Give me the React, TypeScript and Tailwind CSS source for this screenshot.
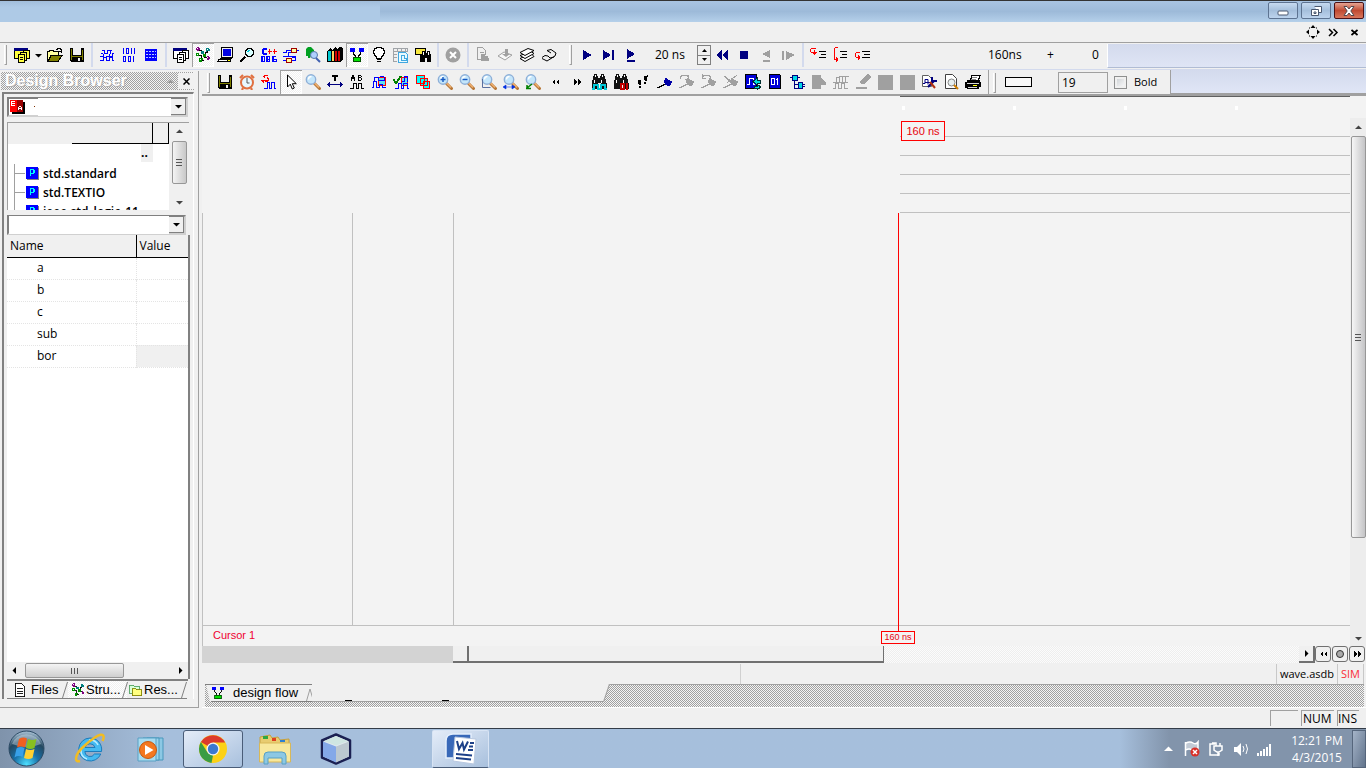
import React from "react";

type ShapeProps = { d: string; s?: string; f?: string; w?: number };
const P = ({ d, s = "none", f = "none", w = 1 }: ShapeProps) => <path d={d} stroke={s} fill={f} strokeWidth={w} />;

const Svg = ({ children, size = 16, smooth = false }: { children: React.ReactNode; size?: number; smooth?: boolean }) => (
  <svg width={size} height={size} viewBox="0 0 16 16" shapeRendering={smooth ? "auto" : "crispEdges"} className="shrink-0" aria-hidden="true">
    {children}
  </svg>
);

const Lens = ({ extra, children }: { extra?: string; children?: React.ReactNode }) => (
  <Svg smooth>
    <path d="M9.5 9.5l5 5" stroke="#b87838" strokeWidth="3" strokeLinecap="round" />
    <path d="M9.5 9l4.5 4.5" stroke="#f0b070" strokeWidth="1.4" />
    <circle cx="6" cy="5.5" r="4.7" fill="#c4e6fb" stroke="#8fb0d8" strokeWidth="1.4" />
    <path d="M3.5 5.5a3 3 0 0 1 3-3" stroke="#fff" fill="none" strokeWidth="1.4" />
    {extra && <path d={extra} stroke="#1459c4" strokeWidth="1.4" fill="none" />}
    {children}
  </Svg>
);

const Binoc = ({ children }: { children?: React.ReactNode }) => (
  <Svg>
    <P f="#111" d="M3 0h3v2h1v2h2V2h1V0h3v2h1v3h1v4h1v6h-6V9H7v6H1V9h0V6h1V2h1z" />
    <P s="#fff" d="M4.500 1v2M11.500 1v2M3.500 6v3M10.500 6v3" />
    {children}
  </Svg>
);

const Pages = ({ fill }: { fill: string }) => (
  <Svg>
    <P d="M.5 1.500h13v10h-13z" s="#000" f={fill} />
    <P d="M0 1h14v3H0z" f="#000080" />
    <P d="M9.500 3.500h6v8h-6z" s="#000" f={fill} />
    <P d="M6.500 5.500h6v8h-6z" s="#000" f={fill} />
    <P d="M4.500 7.500h6v8h-6z" s="#000" f={fill} />
    <P d="M6 10.500h3M6 12.500h3" s="#000" />
  </Svg>
);

const Floppy = () => (
  <Svg>
    <P d="M1 1h14v14H2l-1-1z" f="#000" />
    <P d="M4 1h8v7H4z" f="#f0f0f0" />
    <P d="M2 2h1v11H2zM13 3h1v10h-1z" f="#808000" />
    <P d="M3 9h10v1H3z" f="#808000" />
    <P d="M9 11h2v3H9z" f="#f0f0f0" />
  </Svg>
);

const Tree = ({ size = 16 }: { size?: number }) => (
  <Svg size={size}>
    <P s="#000" d="M3 3.500h3v3h3M12.500 3v2h-2v3M3 8.500h3M6.500 8v3M9.500 8v2h3M6 13.500h3" />
    <P f="#800080" d="M2 0h2v1h1v2H4v1H2V3H1V1h1zM12 9h2v1h1v2h-1v1h-2z" />
    <P f="#008080" d="M11 1h3v1h1v2h-3v1h-1zM6 4h3v3H6z" />
    <P f="#009000" d="M1 6h3v3H1zM4 11h4v2H7v2H4zM8 7h3v3H8z" />
    <P f="#fff" d="M2 1h1v1H2zM12 2h1v1h-1zM2 7h1v1H2zM5 12h1v1H5zM12 10h1v1h-1z" />
  </Svg>
);

const Design = ({ size = 16 }: { size?: number }) => (
  <Svg size={size}>
    <P s="#000" d="M4.500 5v2h1v1h1v2M11.500 5v2h-1v1h-1v2" />
    <P f="#0000ff" d="M1 1h5v4H1zM10 1h5v4h-5z" />
    <P s="#005000" f="#00e000" d="M4.500 10.500h7v4h-7z" />
  </Svg>
);

const Flag = ({ c, mark }: { c: string; mark?: string }) => (
  <Svg>
    <P s={c === "#0000a8" ? "#000" : c} d="M0 13.500h2v-1h2v-1h2v-1h2v-2h2" />
    <P f={c} d="M8 4h2v1h1v1h2v1h2v2h-1v2h-1v1h-3v-1H8V9H7V6h1z" />
    {mark && <P s={c} d={mark} />}
  </Svg>
);

const G = "#a0a0a0";
const Icons: Record<string, React.ReactNode> = {
  windows: <Pages fill="#ffff40" />,
  docs: <Pages fill="#ffffff" />,
  open: (
    <Svg>
      <P d="M.5 14.500v-10h2v-1h4v1h5v3" s="#000" f="#ffffa0" />
      <P d="M1 14.500l3-6h11l-4 6z" s="#000" f="#808000" />
      <P d="M9 2.500h1v-1h3v1h1v3M12 4.500h3" s="#000" />
    </Svg>
  ),
  save: <Floppy />,
  wavew: (
    <Svg>
      <P s="#0000ff" d="M3 3.500h2v3h3v-3h3v3M11 3.500h2M2 6.500h2M1 9.500h3v-3M7 9.500h3v-3M10 9.500h3v-3h2M1 13.500h3v-3h3v3h3v-3h3v3h2" />
    </Svg>
  ),
  bits: (
    <Svg>
      <P s="#0000ff" d="M2.500 1v6M5.500 1.500h2v5h-2zM10.500 1v6M13.500 1v6M2.500 9.500h2v5h-2zM7.500 9.500h2v5h-2zM12.500 9v6" />
    </Svg>
  ),
  grid: (
    <Svg>
      <P f="#0000ff" d="M2 2h12v12H2z" />
      <P s="#b8c8ff" d="M3 4.500h10M3 7.500h10M3 10.500h10" />
      <P s="#0000ff" d="M5.500 2v12M8.500 2v12M11.500 2v12" />
    </Svg>
  ),
  tree: <Tree />,
  pc: (
    <Svg>
      <P s="#000" f="#f0f0f0" d="M4.500 .5h11v10h-11z" />
      <P f="#0000e0" d="M6 2h8v7H6z" />
      <P f="#000" d="M3 11h12v1H3zM1 12h13v3H0v-1h1z" />
      <P s="#fff" d="M2 13.500h8" />
      <P s="#ffff00" d="M11 13.500h2" />
    </Svg>
  ),
  lens: (
    <Svg>
      <P s="#000" w={2} d="M1 15l5-5" />
      <P s="#000" f="#d8ffff" d="M8 1.500h4.500v1h1v1h1v4h-1v1h-1v1H8v-1H7v-1H6v-4h1v-1h1z" />
      <P s="#00c8d8" d="M8 4.500h1v-1h2" />
    </Svg>
  ),
  cpp: (
    <Svg>
      <P f="#0000ff" d="M2 1h4v2H3v3h3v2H2V7H1V2h1z" />
      <P s="#ff0000" d="M7 4.500h4M8.500 2v5M12 4.500h4M13.500 2v5" />
      <P s="#0000ff" d="M1.500 9v6M.5 9.500h3v5h-3zM6.500 9.500h2v5h-2zM6 12.500h3M5.500 9v6M15 9.500h-3v5h3v-2h-2M11.500 9v6" />
    </Svg>
  ),
  blocks: (
    <Svg>
      <P s="#0000ff" d="M0 9.500h5M0 5.500h3v-2h5M13 3.500h3M3 13.500h-3M8 13.500h4v-4H5v-4h4M9 10.500h3" />
      <P s="#a00000" f="#ffffa0" d="M8.500 1.500h5v4h-5zM3.500 11.500h5v4h-5z" />
    </Svg>
  ),
  find: (
    <Svg smooth>
      <P f="#00a020" d="M1 2l2-2h3l3 3v6H6l-1 2H3V9H1z" />
      <circle cx="9" cy="8" r="3.500" fill="#b0d0ff" stroke="#5878a8" />
      <P s="#4060b0" w={2} d="M11 11l4 4" />
    </Svg>
  ),
  books: (
    <Svg>
      <P f="#000" d="M0 4l3-3 2 2 3-3 2 2 3-3 3 2v11l-2 3H0z" />
      <P f="#00c8d0" d="M1 4h3v10H1z" />
      <P f="#ffd060" d="M5 4h2v10H5z" />
      <P f="#d00000" d="M8 4h2v10H8zM11 4h2v10h-2z" />
    </Svg>
  ),
  design: <Design />,
  bulb: (
    <Svg>
      <P s="#000" f="#fff" d="M5.500 .5h5v1h2v2h1v3h-1v2h-1v1h-1v2h-5v-2h-1v-1h-1v-2h-1v-3h1v-2h2z" />
      <P s="#000" d="M6 12.500h4M6 14.500h4" />
    </Svg>
  ),
  sheet: (
    <Svg>
      <P s="#a0a4a8" d="M.5 1.500h14v3h-14zM.5 4v10h3M1 7.500h3M1 10.500h3M4.500 1v3M8.500 1v3M12.500 1v3" />
      <P s="#40a8e0" f="#e8faff" d="M5.500 5.500h7l2 2v8h-9zM8 8.500h3v3h2v2h-5z" />
    </Svg>
  ),
  finder: (
    <Svg>
      <P s="#000" f="#f8e840" d="M.5 1.500h10v6h-10z" />
      <P f="#000" d="M7 4h3v2h2V4h3v3h1v8h-4v-4h-2v4H5V8h2z" />
      <P s="#fff" d="M8.500 5v3M13.500 5v3" />
    </Svg>
  ),
  stopx: (
    <Svg smooth>
      <circle cx="8" cy="8" r="7.500" fill={G} />
      <path d="M5 5l6 6M11 5l-6 6" stroke="#fff" strokeWidth="2" />
    </Svg>
  ),
  gdoc: (
    <Svg>
      <P s={G} d="M2.500 12.500v-12h5l3 3v4M5 5.500h4M3 12.500h3" />
      <P f={G} d="M6 7h4v2h3v2h1v3H6z" />
    </Svg>
  ),
  gin: (
    <Svg smooth>
      <P s={G} f="#f8f8f8" d="M1 9l6-4 8 3-7 5z" />
      <P f={G} d="M8 2h3v5h2l-4 3-4-3h3z" />
    </Svg>
  ),
  stack: (
    <Svg smooth>
      <P s="#000" f="#fff" d="M1 11.500l5 3 9-5-3-3z" />
      <P s="#000" f="#fff" d="M1 8.500l5 3 9-5-3-2z" />
      <P s="#000" f="#fff" d="M1 5.500l5 3 9-5-6-2z" />
    </Svg>
  ),
  page: (
    <Svg smooth>
      <P s="#000" d="M1 11.500l5 2.500 8-5 1-3-5-3.500-4 1 4 2.500M1 10.500l3-2 3 .5 2 2 4-1" />
    </Svg>
  ),
  play: <Svg><P f="#000080" d="M4 3l9 5-9 5z" /></Svg>,
  playto: <Svg><P f="#000080" d="M2 3l8 5-8 5zM11 3h2v10h-2z" /></Svg>,
  playu: <Svg><P f="#000080" d="M4 2l8 5-8 5zM4 13h8v2H4z" /></Svg>,
  rew: <Svg><P f="#000080" d="M8 3v10L2 8zM14 3v10L8 8z" /></Svg>,
  stop: <Svg><P f="#000080" d="M4 4h8v8H4z" /></Svg>,
  grew: <Svg><P f={G} d="M12 3v8L4 7zM5 13h7v2H5z" /></Svg>,
  gfwd: <Svg><P f={G} d="M2 4h2v9H2zM6 4l9 4-9 5z" /></Svg>,
  step1: (
    <Svg>
      <P s="#000" d="M9 4.500h7M11 7.500h5M9 10.500h7" />
      <P s="#ff0000" d="M6 1.500H1M.5 2v3M1 5.500h6M4.500 3v5M3.500 5v2M5.500 5v2" />
    </Svg>
  ),
  step2: (
    <Svg>
      <P s="#000" d="M8 4.500h7M10 7.500h5M8 10.500h7" />
      <P s="#ff0000" d="M6 .5H3M2.500 1v11M2 12.500h4M4.500 10v5M5.500 11v3" />
    </Svg>
  ),
  step3: (
    <Svg>
      <P s="#000" d="M8 4.500h8M10 7.500h6M8 10.500h8" />
      <P s="#ff0000" d="M6 5.500H2M1.500 6v4M2 10.500h4M4.500 8v5M5.500 9v3" />
    </Svg>
  ),
  clock: (
    <Svg smooth>
      <circle cx="8" cy="8.500" r="6" fill="#e8f8ff" stroke="#e07040" strokeWidth="2" />
      <path d="M1 4l3-3M15 4l-3-3M4 14l-1 2M12 14l1 2" stroke="#e07040" strokeWidth="2.200" />
      <path d="M8 4v5h2.500" stroke="#555" fill="none" />
    </Svg>
  ),
  rwave: (
    <Svg>
      <P s="#0000ff" d="M3 14.500h3v-6h2v6h2v-6h3v6h2" />
      <P f="#ff0000" d="M4 0v1h3v1H4v2H3V3H2V2h1V1h1zM6 3h1v1h1v3H7v1H4V7H3V6h4zM0 6h3v3H2V8H1V7H0z" />
    </Svg>
  ),
  arrow: <Svg smooth><P s="#000" f="#fff" d="M4.500 1v12l2.800-2.800 2 4.800 2-1-2-4.300h4z" /></Svg>,
  zoom: <Lens />,
  measure: (
    <Svg>
      <P f="#000" d="M5 1h6v2H9v4H7V3H5z" />
      <P s="#000080" d="M1 10.500h14" />
      <P f="#000080" d="M3 8v5L0 10.500zM13 8v5l3-2.500z" />
    </Svg>
  ),
  ab: (
    <Svg>
      <P s="#000" d="M2.500 7V3h1V1h1v2h1v4M2 4.500h4M9.500 1v6M9 1.500h3M12.500 2v1M9 3.500h3M12.500 4v2M9 6.500h3M1 14.500h3v-5h3v5h2v-5h3v5h3" />
    </Svg>
  ),
  wsel: (
    <Svg>
      <P s="#ff0000" f="#60e0f0" d="M7.500 3.500h7v8h-7z" />
      <P s="#0000ff" d="M1 13.500h1v-6h3v6h3v-3h3v3h4M3 7v-3.500h4V7M8 6.500h5v-4M9 2.500h4" />
    </Svg>
  ),
  wcheck: (
    <Svg>
      <P s="#ff0000" f="#60e0f0" d="M8.500 3.500h6v8h-6z" />
      <P s="#0000ff" d="M2 14.500h3v-5h3v5h2v-5h4v5h2M9 7.500h2v-5h3v5" />
      <P s="#008000" w={2} d="M0 5l3 4 5-7" />
    </Svg>
  ),
  layers: (
    <Svg>
      <P s="#ff0000" f="#00ffff" d="M1.500 1.500h8v8h-8zM5.500 4.500h7v7h-7zM8.500 7.500h6v7h-6z" />
    </Svg>
  ),
  zin: <Lens extra="M3.500 5.500h5M6 3v5" />,
  zout: <Lens extra="M3.500 5.500h5" />,
  zarea: <Lens><path d="M1.500 5v8.500h8" fill="none" stroke="#5a70a0" /></Lens>,
  zfit: <Lens><path d="M1 13h10M0 13l3-2v4zM12 13l-3-2v4z" stroke="#0030e0" fill="#0030e0" strokeWidth=".6" /></Lens>,
  zback: <Lens><path d="M2 15v-4M1 14.500h5M2 14l5-4" stroke="#008000" fill="none" strokeWidth="1.500" /></Lens>,
  prev: <Svg><P f="#000" d="M8 5v6L5 8zM12 5v6L9 8z" /></Svg>,
  next: <Svg><P f="#000" d="M5 5v6l3-3zM9 5v6l3-3z" /></Svg>,
  bwave: <Binoc><P s="#00c8d8" w={2} d="M1 15h2v-4h4v4h3v-4h4v4h2" /></Binoc>,
  bbits: <Binoc><P s="#c00000" w={2} d="M8 10h3v5H8zM14 9v7" /></Binoc>,
  feet: <Svg><P f="#000" d="M3 6h3v5H4v-1H3zM4 12h2v2H4zM9 2h3v5h-2V6H9zM9 8h2v2H9zM12 1h1v2h-1z" /></Svg>,
  flag: <Flag c="#0000a8" />,
  gf1: <Flag c={G} mark="M1.500 5V3l2-2h4l2 2v2M6 5.500h4M9.500 1v4" />,
  gf2: <Flag c={G} mark="M9.500 4V3l-2-2h-4l-2 2M1.500 0v5M1 4.500h4" />,
  gf3: <Flag c={G} mark="M1 2l11 10M14 1L4 9M2 2l11 10" />,
  wexp: (
    <Svg>
      <P s="#000" f="#0000d8" d="M.5 .5h11v14H.5z" />
      <P s="#fff" d="M2 10.500h2v-6h4v6h2" />
      <P s="#003030" f="#00e0e0" d="M12 4v2h3v3h-3v2L8 7.500zM12 10v2h-3v2h3v2l4-3z" />
    </Svg>
  ),
  bexp: (
    <Svg>
      <P s="#000" f="#0000d8" d="M2.500 .5h10l1 1v13h-11z" />
      <P s="#fff" d="M4.500 4.500h3v6h-3zM10.500 4v7M9 5.500h1" />
    </Svg>
  ),
  hier: (
    <Svg>
      <P s="#000080" f="#00d8e8" d="M3.500 1.500h5v5h-5z" />
      <P s="#000080" d="M1 3.500h2M9 3.500h2M5.500 7v7h5M6 10.500h10" />
      <P s="#000080" f="#00d8e8" d="M9.500 8.500h4v6h-4z" />
      <P s="#000080" d="M14 12.500h2" />
    </Svg>
  ),
  gshape: <Svg><P f={G} d="M1 1h9v3l5 5v2h-5v4H1z" /></Svg>,
  gwaves: (
    <Svg><P s={G} d="M3 9V3.500h3V9M6 9V2.500h3V9M9 9V2.500h3V9M12 2.500h4M0 8.500h15M0 14.500h2v-5h3v5h3v-5h3v5h4" /></Svg>
  ),
  gpen: <Svg><P f={G} d="M12 0h2l2 3-6 7H6L4 8zM1 13h11v2H1z" /></Svg>,
  gbox: <Svg><P f={G} d="M1 1h15v15H1z" /></Svg>,
  tools: (
    <Svg smooth>
      <P s="#606060" f="#fff" d="M1.500 1.500h6l3 3v8h-9z" />
      <P s="#000080" d="M2 9.500h2v-4h3v5M4 8.500h5" />
      <P s="#000080" w={2} d="M7 13l6-6M11 3v4h5" />
      <P s="#b03010" w={2} d="M9 8l5 6" />
    </Svg>
  ),
  preview: (
    <Svg smooth>
      <P s="#404040" f="#fff" d="M2.500 .5h7l4 4v10h-11z" />
      <circle cx="8.500" cy="8.500" r="3.500" fill="#e8f0f0" stroke="#888" />
      <P s="#d08000" w={2} d="M11 11l4 4" />
    </Svg>
  ),
  print: (
    <Svg>
      <P s="#000" f="#fff" d="M5 7.500l2-6h8l-2 6z" />
      <P f="#000" d="M2 6h13v2h1v5h-2v2H2v-1H0V8h2z" />
      <P s="#d8d8d8" d="M2 9.500h12M3 13.500h9" />
      <P s="#ffff00" d="M8 11.500h4" />
      <P s="#888" d="M7 3.500h5M6 5.500h5" />
    </Svg>
  ),
};

const Tool = ({ n, on = false }: { n: string; on?: boolean }) => (
  <button
    type="button"
    aria-label={n}
    className={`flex h-6 w-[22px] shrink-0 items-center justify-center ${on ? "bg-[repeating-conic-gradient(#f0f0f0_0_25%,#ffffff_0_50%)] bg-[length:2px_2px] shadow-[inset_1px_1px_0_#a0a0a0,inset_-1px_-1px_0_#ffffff]" : ""}`}
  >
    {Icons[n]}
  </button>
);
const Tools = ({ list, on = [] }: { list: string; on?: string[] }) => (
  <>
    {list.split(" ").map((n, i) => (
      <Tool key={i} n={n} on={on.includes(n)} />
    ))}
  </>
);
const Sep = () => <div className="mx-[3px] h-6 w-0.5 shrink-0 bg-[#d3daed]" />;
const Grip = () => <div className="mx-1 mt-0.5 h-5 w-[3px] shrink-0 border-r border-b border-l border-[#a0a0a0] border-l-white" />;

const Chevron = ({ dir = "down", c = "#000" }: { dir?: "down" | "up" | "left" | "right"; c?: string }) => (
  <svg width="7" height="7" viewBox="0 0 7 7" aria-hidden="true" className="shrink-0">
    <path fill={c} d={{ down: "M0 2h7L3.500 5.500z", up: "M0 5h7L3.500 1.500z", left: "M5 0v7L1.500 3.500z", right: "M2 0v7l3.500-3.500z" }[dir]} />
  </svg>
);

const dither = "bg-[repeating-conic-gradient(#a0a0a0_0_25%,#f4f4f4_0_50%)] bg-[length:2px_2px]";

const Combo = ({ label, icon }: { label: string; icon?: React.ReactNode }) => (
  <div className="flex h-5 items-center border-2 border-[#808080] border-r-[#d0d0d0] border-b-[#d0d0d0] bg-white">
    {icon}
    <select aria-label={label} className="min-w-0 flex-1 appearance-none bg-white outline-none">
      <option></option>
    </select>
    <span className="flex h-full w-[15px] items-center justify-center border-r border-b border-[#808080] bg-[#f0f0f0]">
      <Chevron />
    </span>
  </div>
);

const PIcon = () => (
  <svg width="13" height="13" viewBox="0 0 13 13" className="shrink-0" shapeRendering="crispEdges" aria-hidden="true">
    <path d="M1 1h12v12H1z" fill="#808080" />
    <path d="M0 0h12v12H0z" fill="#0000ff" />
    <path d="M4 2h4v1h1v3H8v1H5v2H4zM5 3v3h2V3z" fill="#00ffff" fillRule="evenodd" />
  </svg>
);

const TitleBar = () => (
  <header className="flex h-[22px] items-start justify-end border-t border-[#333] bg-linear-to-b from-[#a9c4e2] via-[#9dbad9] to-[#b5d0ea] pr-[2px]">
    <div className="mr-auto h-full w-[380px] bg-linear-to-b from-[#a2bedb] to-[#aecae6] to-30%" />
    <div className="flex gap-[3px] pt-px">
      {["Minimize", "Restore", "Close"].map((n) => (
        <button
          key={n}
          type="button"
          aria-label={n}
          className={`flex h-[17px] w-[30px] items-center justify-center rounded-[2px] border ${n === "Close" ? "border-[#4c1217] bg-linear-to-b from-[#e5a493] via-[#c04a32] to-[#d8765c]" : "border-[#5d7391] bg-linear-to-b from-[#c6daf0] via-[#a5bfdc] to-[#bcd3ed]"}`}
        >
          <svg width="14" height="12" viewBox="0 0 14 12" aria-hidden="true">
            {n === "Minimize" && <rect x="2" y="6" width="10" height="4" rx="1" fill="#fff" stroke="#4a5870" />}
            {n === "Restore" && <path d="M5.500 1.500h7v6h-3M2.500 4.500h7v6h-7zM5 7h2v1.500H5z" fill="#fff" stroke="#4a5870" />}
            {n === "Close" && <path d="M2 1.500h3l2 2.500 2-2.500h3L8.800 6l3.200 4.500H9L7 8l-2 2.500H2L5.200 6z" fill="#fff" stroke="#53484e" />}
          </svg>
        </button>
      ))}
    </div>
  </header>
);

const DesignBrowser = () => (
  <aside className="mt-px flex w-[199px] shrink-0 flex-col border-r border-b border-[#a0a0a0] pb-2 pl-px">
    <div className={`mt-px mr-1 flex h-[18px] items-center ${dither}`}>
      <h1 className="flex-1 pl-1 font-['Liberation_Sans'] text-[16px] leading-4 font-bold text-white [text-shadow:1px_1px_0_#b0b0b0]">Design Browser</h1>
      <span className="mr-1"><Chevron dir="up" c="#989898" /></span>
      <button type="button" aria-label="Close panel" className="flex h-4 w-4 items-center justify-center bg-[#f0f0f0]">
        <svg width="7" height="7" viewBox="0 0 7 7"><path d="M.5.5l6 6M6.500.5l-6 6" stroke="#000" strokeWidth="1.500" /></svg>
      </button>
    </div>
    <div className="mt-[2px] mr-[4px] ml-px flex flex-1 flex-col border-t-2 border-r border-l-2 border-t-[#808080] border-r-white border-l-[#808080] pt-[3px] pl-[3px]">
      <div className="mr-[5px]">
        <Combo
          label="Design root"
          icon={
            <svg width="28" height="16" viewBox="0 0 28 16" shapeRendering="crispEdges" className="ml-px" aria-hidden="true">
              <path d="M2 3h13v12H2z" fill="#000" />
              <path d="M0 1h7v12H0z" fill="#f00" />
              <path d="M7 1h6v12H7z" fill="#900" />
              <path d="M5 2.500H2M1.500 2v5M2 4.500h3M2 6.500h3M8.500 11V8M9 7.500h2M11.500 8v3M9 9.500h2" fill="none" stroke="#fff" />
              <path d="M24 7h1v1h-1z" fill="#803000" />
            </svg>
          }
        />
      </div>
      <div className="mt-[5px] mr-1 flex h-[88px] border-t border-l border-[#a0a0a0] bg-white">
        <div className="flex-1 overflow-hidden">
          <div className="flex h-[21px] bg-[#f0f0f0]">
            <div className="w-16" />
            <div className="flex-1 border-r border-b border-black" />
            <div className="w-4 border-r border-b border-black" />
          </div>
          <div className="mr-4 mb-0.5 ml-auto h-[18px] w-3 bg-[#f0f0f0] font-['Open_Sans'] text-[12px] leading-[18px] font-bold">..</div>
          <ul className="ml-[6px] border-l border-[#a0a0a0] font-['Open_Sans'] text-[12px] font-semibold">
            {["std.standard", "std.TEXTIO", "ieee.std_logic_11"].map((n) => (
              <li key={n} className="flex h-[19px] items-center whitespace-nowrap">
                <span className="mr-px h-px w-[10px] shrink-0 bg-[#a0a0a0]" />
                <PIcon />
                <span className="ml-1 leading-[18px]">{n}</span>
              </li>
            ))}
          </ul>
        </div>
        <div className="flex w-5 flex-col items-center justify-between bg-[#f0f0f0] pt-[5px] pb-1">
          <Chevron dir="up" c="#444" />
          <div className="mt-[6px] mb-auto flex h-[43px] w-[15px] flex-col items-center justify-center gap-0.5 rounded-[2px] border border-[#979797] bg-linear-to-r from-[#f4f4f4] to-[#c8c8c8]">
            <i className="h-px w-[6px] bg-[#555]" /><i className="h-px w-[6px] bg-[#555]" /><i className="h-px w-[6px] bg-[#555]" />
          </div>
          <Chevron c="#444" />
        </div>
      </div>
      <div className="mt-[5px] mr-[7px]"><Combo label="Signal filter" /></div>
      <div className="mr-[3px] flex flex-1 flex-col border-r-2 border-[#808080] bg-white">
        <table className="w-full table-fixed border-collapse font-['Open_Sans'] text-[12px]">
          <thead>
            <tr className="h-[22px] border-b border-black bg-[#f0f0f0] text-left">
              <th className="w-[129px] border-r border-black pl-[3px] leading-[18px] font-normal">Name</th>
              <th className="pl-[3px] leading-[18px] font-normal">Value</th>
            </tr>
          </thead>
          <tbody>
            {["a", "b", "c", "sub", "bor"].map((n) => (
              <tr key={n} className="h-[22px] border-b border-dotted border-[#e4e4e4]">
                <td className="border-r border-dotted border-[#e4e4e4] pl-[30px] leading-4">{n}</td>
                <td className={n === "bor" ? "bg-[#f0f0f0]" : ""} />
              </tr>
            ))}
          </tbody>
        </table>
        <div className="mt-auto flex h-[17px] items-center bg-[#f0f0f0] px-1">
          <Chevron dir="left" />
          <div className="ml-[7px] flex h-[15px] w-[99px] items-center justify-center gap-0.5 rounded-[2px] border border-[#979797] bg-linear-to-b from-[#f4f4f4] to-[#cfcfcf]">
            <i className="h-[6px] w-px bg-[#555]" /><i className="h-[6px] w-px bg-[#555]" /><i className="h-[6px] w-px bg-[#555]" />
          </div>
          <span className="ml-auto"><Chevron dir="right" /></span>
        </div>
      </div>
      <div className="mr-[5px] flex h-5 border-t-2 border-[#808080] font-['Liberation_Sans'] text-[13px]">
        {[
          { n: "Files", w: "w-[61px] pl-[6px]", icon: <Svg size={14}><P s="#000" f="#fff" d="M2.500 .5h7l4 4v11h-11zM4 6.500h7M4 9.500h7M4 12.500h7" /></Svg> },
          { n: "Stru...", w: "w-[59px] pl-[3px]", icon: <Tree size={14} /> },
          { n: "Res...", w: "w-[60px] pl-[2px]", icon: <Svg size={14}><P s="#50a060" f="#d8ffd8" d="M.5 2.500h5v1h6v8H.5z" /><P s="#808000" f="#ffff80" d="M3.500 6.500h5v1h6v7h-11z" /></Svg> },
        ].map((t) => (
          <button
            key={t.n}
            type="button"
            className={`flex shrink-0 items-center border-b border-[#808080] ${t.n === "Files" ? "gap-1" : "gap-px"} ${t.n === "Stru..." ? "bg-[repeating-conic-gradient(#f0f0f0_0_25%,#ffffff_0_50%)] bg-[length:2px_2px]" : ""} ${t.w}`}
          >
            {t.icon}
            <span className="leading-4">{t.n}</span>
            <svg width="6" height="16" viewBox="0 0 6 16" className="ml-auto shrink-0"><path d="M5.500 0L.5 16" stroke="#808080" /></svg>
          </button>
        ))}
      </div>
    </div>
  </aside>
);

const WaveToolbar = () => (
  <div className="flex h-[26px] items-center border-b-2 border-[#a0a0a0]">
    <div className="ml-px"><Grip /></div>
    <Tools list="save clock rwave arrow zoom measure ab wsel wcheck layers zin zout zarea zfit zback prev next bwave bbits feet flag gf1 gf2 gf3 wexp bexp hier gshape gwaves gpen gbox gbox tools preview print" on={["arrow"]} />
    <div className="ml-1 h-6 w-px shrink-0 bg-[#a0a0a0]" />
    <Grip />
    <button type="button" aria-label="Line style" className="ml-[5px] h-[10px] w-[27px] shrink-0 border border-black bg-[#f8f8f8]" />
    <input aria-label="Font size" defaultValue="19" className="ml-[26px] h-[21px] w-[50px] shrink-0 border border-[#a0a0a0] px-[3px] font-['Open_Sans'] text-[12px]" />
    <label className="ml-[6px] flex items-center gap-[7px] font-['Open_Sans'] text-[11px]">
      <input type="checkbox" className="h-[13px] w-[13px] appearance-none border border-[#8e8f8f] bg-linear-to-br from-[#c8ccd0] to-white shadow-[inset_0_0_0_2px_#f0f0f0]" />
      Bold
    </label>
    <div className="ml-[13px] h-full flex-1 border-b border-l border-[#a0a0a0] bg-linear-to-b from-[#d3daed] to-[#e0e6f6]" />
  </div>
);

const WavePane = () => (
  <section className="flex flex-1 bg-[#f3f3f3]">
    <div className="relative flex flex-1 flex-col">
      <div className="flex h-[117px]">
        <div className="w-[698px]" />
        <div className="flex flex-1 flex-col border-t border-[#606060]">
          <div className="flex h-[21px] items-center gap-[108px] pl-[2px]">
            {[0, 1, 2, 3].map((i) => <i key={i} className="h-1 w-[3px] bg-white" />)}
          </div>
          <div className="h-[19px] border-b border-[#c0c0c0]" />
          {[0, 1, 2, 3].map((i) => <div key={i} className="h-[19px] border-b border-[#c0c0c0]" />)}
        </div>
      </div>
      <div className="flex flex-1 border-b border-l border-[#c0c0c0]">
        <div className="w-[150px] border-r border-[#c0c0c0]" />
        <div className="w-[101px] border-r border-[#c0c0c0]" />
      </div>
      <div className="h-5 border-l border-[#c0c0c0] pl-[10px] font-['Liberation_Sans'] text-[11px] leading-[18px] text-[#f00030]">Cursor 1</div>
      <div className="absolute top-[25px] left-[699px] flex h-5 w-11 items-center justify-center border border-[#ff0000] bg-[#f3f3f3] font-['Liberation_Sans'] text-[11px] text-red-600">160 ns</div>
      <div className="absolute top-[117px] bottom-[14px] left-[696px] w-px bg-[#ff0000]" />
      <div className="absolute bottom-[2px] left-[679px] flex h-[13px] w-[34px] items-center justify-center border border-[#ff0000] bg-[#f3f3f3] font-['Liberation_Sans'] text-[9px] text-red-600">160 ns</div>
    </div>
    <div className="mt-[22px] flex w-4 flex-col items-center bg-[#ededed]">
      <div className="flex h-[18px] items-center"><Chevron dir="up" c="#444" /></div>
      <div className="flex h-[402px] w-[15px] flex-col items-center justify-center gap-0.5 rounded-[2px] border border-[#979797] bg-linear-to-r from-[#f6f6f6] to-[#c4c4c6]">
        <i className="h-px w-[6px] bg-[#555]" /><i className="h-px w-[6px] bg-[#555]" /><i className="h-px w-[6px] bg-[#555]" />
      </div>
      <div className="mt-auto mb-1"><Chevron c="#444" /></div>
    </div>
  </section>
);

const BottomScroll = () => (
  <div className="flex h-[18px] items-start">
    <div className="h-[17px] w-[251px] shrink-0 bg-[#d3d3d3]" />
    <div className="h-[17px] w-4 shrink-0 border-r-2 border-b-2 border-[#707070]" />
    <div className="h-[17px] w-[415px] shrink-0 border-r border-b-2 border-[#707070]" />
    <div className="h-[17px] flex-1 bg-[repeating-conic-gradient(#eeeeee_0_25%,#fbfbfb_0_50%)] bg-[length:2px_2px]" />
    <button type="button" aria-label="Scroll right" className="flex h-[17px] w-4 items-center justify-center border-r-2 border-b-2 border-[#707070]"><Chevron dir="right" /></button>
    {["prev", "dot", "next"].map((n) => (
      <button key={n} type="button" aria-label={n} className="mr-px flex h-4 w-4 items-center justify-center overflow-hidden rounded-[3px] border border-[#707070] bg-[#f0f0f0]">
        {n === "dot" ? <span className="h-2 w-2 rounded-full border border-[#333] bg-[#aaa]" /> : Icons[n]}
      </button>
    ))}
  </div>
);

const DocTabs = () => (
  <div className={`mr-[2px] ml-[3px] flex h-[23px] ${dither}`}>
    <svg width="6" height="18" viewBox="0 0 6 18" className="shrink-0"><path d="M1 0h5v18H5z" fill="#f0f0f0" /><path d="M0 .5h6" stroke="#808080" /></svg>
    <button type="button" className="flex h-[18px] w-[101px] shrink-0 items-center gap-2 border-t border-b border-[#808080] bg-[#f0f0f0] text-left font-['Liberation_Sans'] text-[13px]">
      <Design size={14} />
      <span className="leading-4 whitespace-nowrap">design flow</span>
      <svg width="8" height="16" viewBox="0 0 8 16" className="ml-auto shrink-0"><path d="M.5 16L4 4l3.500 12" fill="none" stroke="#a0a0a0" /></svg>
    </button>
    <div className="flex h-[18px] w-[291px] shrink-0 items-end gap-[90px] border-b border-[#a0a0a0] bg-[#f0f0f0] pl-[33px]">
      <i className="h-px w-[7px] shrink-0 bg-black" /><i className="h-px w-[7px] shrink-0 bg-black" />
    </div>
    <svg width="7" height="18" viewBox="0 0 7 18" className="shrink-0"><path d="M0 0h6L0 18z" fill="#f0f0f0" /><path d="M6.500 0L.5 18" stroke="#a0a0a0" /></svg>
    <div className="h-px flex-1 bg-[#a0a0a0]" />
  </div>
);

const StartOrb = () => (
  <svg width="37" height="37" viewBox="0 0 37 37" aria-hidden="true">
    <defs>
      <radialGradient id="orb" cx=".5" cy=".95" r=".9"><stop offset="0" stopColor="#4ee0ff" /><stop offset=".4" stopColor="#1870a8" /><stop offset=".75" stopColor="#244860" /><stop offset="1" stopColor="#9ab4c8" /></radialGradient>
    </defs>
    <circle cx="18.500" cy="18.500" r="17.500" fill="url(#orb)" stroke="#2c4a64" />
    <path d="M4 14a15 13 0 0 1 29 0q-14 6-29 0z" fill="#dceaf4" opacity=".4" />
    <path d="M11 9q4-2.500 8-.5l-2 9q-4-2-8 0z" fill="#f06020" />
    <path d="M20 9q4 2 8.500 0l-2 9q-4 2-8.500 0z" fill="#88c020" />
    <path d="M8.500 18.500q4-2.500 8-.5l-2 9q-4-2-8 .5z" fill="#38a0e8" />
    <path d="M18 19q4 2 8.500 0l-2 9q-4 2-8.500 0z" fill="#ffd030" />
  </svg>
);
const IE = () => (
  <svg width="32" height="32" viewBox="0 0 32 32" aria-hidden="true">
    <path d="M16 5a11.500 11.500 0 1 0 10.800 16h-6.300a5.200 5.200 0 0 1-9.700-2.500h16.700A11.500 11.500 0 0 0 16 5zm-5 9.500a5.200 5.200 0 0 1 10 0z" fill="#45baf0" stroke="#1c7cbc" />
    <path d="M15 7a9 9 0 0 1 9 5M7 17a9 9 0 0 0 6 9" fill="none" stroke="#b8ecff" strokeWidth="1.500" />
    <path d="M6 28c-6 2-5-6 2-13S28-2 29.500 3c.6 2-.5 4-1 5" fill="none" stroke="#f2bc22" strokeWidth="2.500" />
  </svg>
);
const Player = () => (
  <svg width="28" height="28" viewBox="0 0 28 28" aria-hidden="true">
    <path d="M10 3h16v22H10z" fill="#8cc8e4" stroke="#4898bc" />
    <path d="M6 3h16v22H6z" fill="#9cd4ec" stroke="#4898bc" />
    <path d="M1 3h18v23H1z" fill="#a8dcf0" stroke="#58a0c4" />
    <circle cx="11" cy="15" r="8.500" fill="#f47820" stroke="#c45810" />
    <path d="M8 10l8.500 5L8 20z" fill="#fff" />
  </svg>
);
const Chrome = () => (
  <svg width="30" height="30" viewBox="0 0 30 30" aria-hidden="true">
    <circle cx="15" cy="15" r="14" fill="#fcd116" />
    <path d="M15 15L2.900 8A14 14 0 0 1 27.100 8.500H15z" fill="#dc3a2c" />
    <path d="M2.900 8L9.500 18.500 15 21.500 13.500 29A14 14 0 0 1 2.900 8z" fill="#3a9c44" />
    <circle cx="15" cy="15" r="6.500" fill="#f4f4f4" /><circle cx="15" cy="15" r="5.200" fill="#3c78d0" />
  </svg>
);
const Explorer = () => (
  <svg width="34" height="32" viewBox="0 0 34 32" aria-hidden="true">
    <path d="M2 4l10-2 2 3 6-1 2 3 9-1v22H2z" fill="#e8cc70" stroke="#c4a040" />
    <path d="M5 3h5v3H5z" fill="#30a840" /><path d="M14 5h4v3h-4z" fill="#e04020" /><path d="M22 7h5v2h-5z" fill="#3080d0" />
    <path d="M1.500 10h31v19h-31z" fill="#f8e89c" stroke="#d8b858" />
    <path d="M6 31v-8q0-4 4-4h14q4 0 4 4v8h-4v-6H10v6z" fill="#8cc8e4" stroke="#58a0c4" />
  </svg>
);
const Cube = () => (
  <svg width="32" height="32" viewBox="0 0 32 32" aria-hidden="true">
    <path d="M16 1.500l14 6v17l-14 6-14-6v-17z" fill="#e0e8ee" stroke="#1b2052" strokeWidth="2.500" strokeLinejoin="round" />
    <path d="M3 8.500l13 5v16l-13-6z" fill="#84a8e8" /><path d="M16 13.500l13-5v15l-13 6z" fill="#bcc8d0" /><path d="M4 8l12-5 12 5-12 4.500z" fill="#cfe6e2" />
  </svg>
);
const Word = () => (
  <svg width="32" height="32" viewBox="0 0 32 32" aria-hidden="true">
    <path d="M1 8q0-7 7-7h18v24H1z" fill="#3868b8" stroke="#e4eefc" strokeWidth="1.500" />
    <path d="M10 4l21 2-2 25-21-3z" fill="#fff" stroke="#b8c8e0" />
    <path d="M12 8l2 8 3.500-6 1.500 6.500L23 8.500" fill="none" stroke="#1c4088" strokeWidth="2" />
    <path d="M25 10h4M24 13.500h4M23 17h5M11 21l16 1.500M11 25l15 1.500" stroke="#1c4088" strokeWidth="1.800" />
  </svg>
);

const Taskbar = () => (
  <footer className="flex h-10 items-center border-t border-[#333c48] bg-[#a6bfdc] bg-linear-to-r from-[#7f93ab] via-[#a6bfdc] via-12% to-[#a6bfdc]">
    <nav className="flex h-full items-center">
      <button type="button" aria-label="Start" className="ml-2"><StartOrb /></button>
      <button type="button" aria-label="Internet Explorer" className="ml-[29px]"><IE /></button>
      <button type="button" aria-label="Media Player" className="ml-[31px]"><Player /></button>
      <button type="button" aria-label="Chrome" className="ml-[18px] flex h-[38px] w-[60px] items-center justify-center rounded-[3px] border border-[#4a5d78] bg-linear-to-br from-[#e4ecf8] to-[#a8c0dd]"><Chrome /></button>
      <button type="button" aria-label="Explorer" className="ml-[15px]"><Explorer /></button>
      <button type="button" aria-label="Virtual machine" className="ml-[28px]"><Cube /></button>
      <button type="button" aria-label="Word" className="ml-[80px] flex h-[38px] w-[57px] items-center justify-center rounded-[2px] border border-[#d8e4f4] border-b-[#4a5d78] bg-linear-to-br from-[#e4ecf8] to-[#a8c0dd]"><Word /></button>
    </nav>
    <div className="ml-auto flex h-full items-center bg-linear-to-r from-[#a6bfdc] to-[#8294ab] to-20% pl-[44px] text-white">
      <svg width="108" height="18" viewBox="0 0 108 18" aria-hidden="true">
        <path d="M0 11h9L4.500 6.500z" fill="#fff" />
        <path d="M21.500 2v14M22 3q4-2 7 0t5-1v8q-3 2-6 0t-6 0" fill="#fff" fillOpacity=".5" stroke="#fff" strokeWidth="1.500" />
        <circle cx="31" cy="12" r="4.500" fill="#d83028" /><path d="M29 10l4 4M33 10l-4 4" stroke="#fff" strokeWidth="1.500" />
        <path d="M51 4h-5v11h9v-2M48 3h4v2M52 3v3M56 3v3M50 6h8v4l-3 2h-2l-3-2zM54 12v4" fill="none" stroke="#fff" strokeWidth="1.500" />
        <path d="M70 7h3l4-4v13l-4-4h-3z" fill="#fff" /><path d="M79 6q2 3 0 6M82 4q3 5 0 10" fill="none" stroke="#fff" />
        <path d="M93 13h2v3h-2zM96 11h2v5h-2zM99 9h2v7h-2zM102 7h2v9h-2zM105 4h2v12h-2z" fill="#fff" />
      </svg>
      <time className="ml-[17px] w-[56px] text-center font-['Open_Sans'] text-[12px] leading-[17px] whitespace-nowrap">12:21 PM<br />4/3/2015</time>
      <button type="button" aria-label="Show desktop" className="ml-[7px] h-[38px] w-[14px] border border-[#56667c] bg-linear-to-br from-[#a5b4c8] to-[#62748c]" />
    </div>
  </footer>
);

export default function App() {
  return (
    <div className="flex min-h-screen flex-col bg-[#f0f0f0] font-['Open_Sans',sans-serif] text-[12px] text-black">
      <TitleBar />
      <div className="flex h-[21px] items-center justify-end gap-2 border-b border-[#a0a0a0] pr-1">
        <button type="button" aria-label="Move">
          <svg width="14" height="14" viewBox="0 0 14 14"><path d="M7 0l2.500 3h-5zM7 14l2.500-3h-5zM0 7l3-2.500v5zM14 7l-3-2.500v5z" /><path d="M3 3h1M10 3h1M3 11h1M10 11h1" stroke="#000" /></svg>
        </button>
        <button type="button" aria-label="More">
          <svg width="11" height="9" viewBox="0 0 11 9"><path d="M1 1l3.500 3.500L1 8M5.500 1L9 4.500 5.500 8" fill="none" stroke="#000" strokeWidth="1.500" /></svg>
        </button>
        <button type="button" aria-label="Close document" className="mx-1">
          <svg width="7" height="7" viewBox="0 0 7 7"><path d="M.5 1l6 5M6.500 1l-6 5" stroke="#000" strokeWidth="1.700" /></svg>
        </button>
      </div>
      <div className="flex h-[27px] items-start border-b border-[#d3daed] leading-6">
        <Grip />
        <Tool n="windows" />
        <button type="button" aria-label="Window list" className="flex h-6 w-[11px] items-center justify-center"><Chevron /></button>
        <Tools list="open save" />
        <Sep />
        <Tools list="wavew bits grid" />
        <Sep />
        <Tools list="docs tree pc lens cpp blocks find books design bulb sheet finder" on={["tree", "design"]} />
        <Sep />
        <Tools list="stopx" />
        <Sep />
        <Tools list="gdoc gin stack page" />
        <div className="w-[5px]" />
        <Grip />
        <Tools list="play playto playu" />
        <input aria-label="Run time" defaultValue="20 ns" className="ml-[13px] h-6 w-[42px] bg-transparent font-['Open_Sans'] text-[12px]" />
        <div className="mt-0.5 flex h-5 w-[14px] flex-col border border-[#808080]">
          <button type="button" aria-label="Increase" className="flex flex-1 items-center justify-center border-b border-[#808080]"><svg width="5" height="3"><path d="M0 3h5L2.500 0z" /></svg></button>
          <button type="button" aria-label="Decrease" className="flex flex-1 items-center justify-center"><svg width="5" height="3"><path d="M0 0h5L2.500 3z" /></svg></button>
        </div>
        <Tools list="rew stop grew gfwd" />
        <Sep />
        <Tools list="step1 step2 step3" />
        <span className="ml-[115px] w-[59px]">160ns</span>
        <span className="w-[45px]">+</span>
        <span className="w-[15px]">0</span>
        <div className="mt-px h-6 flex-1 border-b border-l border-white border-b-[#b0bcd4] bg-linear-to-b from-[#d3daed] to-[#dfe5f5]" />
      </div>
      <div className="flex flex-1">
        <DesignBrowser />
        <main className="ml-[3px] flex min-w-0 flex-1 flex-col">
          <WaveToolbar />
          <WavePane />
          <BottomScroll />
          <div className="flex h-5 justify-end text-[11px] leading-5">
            <div className="w-[539px] border-r border-[#d0d0d0]" />
            <div className="flex-1" />
            <span className="border-l border-[#c8c8c8] px-[3px]">wave.asdb</span>
            <span className="mr-[2px] border-x border-[#c8c8c8] px-[3px] text-red-500">SIM</span>
          </div>
          <DocTabs />
          <div className="h-px bg-white" />
        </main>
      </div>
      <div className="flex h-5 items-center justify-end gap-[3px] pr-[7px] text-[12px] leading-4">
        <div className="h-4 w-7 border-t border-l border-[#a0a0a0]" />
        <div className="h-4 w-[33px] border-t border-l border-[#a0a0a0] pl-px">NUM</div>
        <div className="h-4 w-[22px] border-t border-l border-[#a0a0a0]">INS</div>
      </div>
      <Taskbar />
    </div>
  );
}
